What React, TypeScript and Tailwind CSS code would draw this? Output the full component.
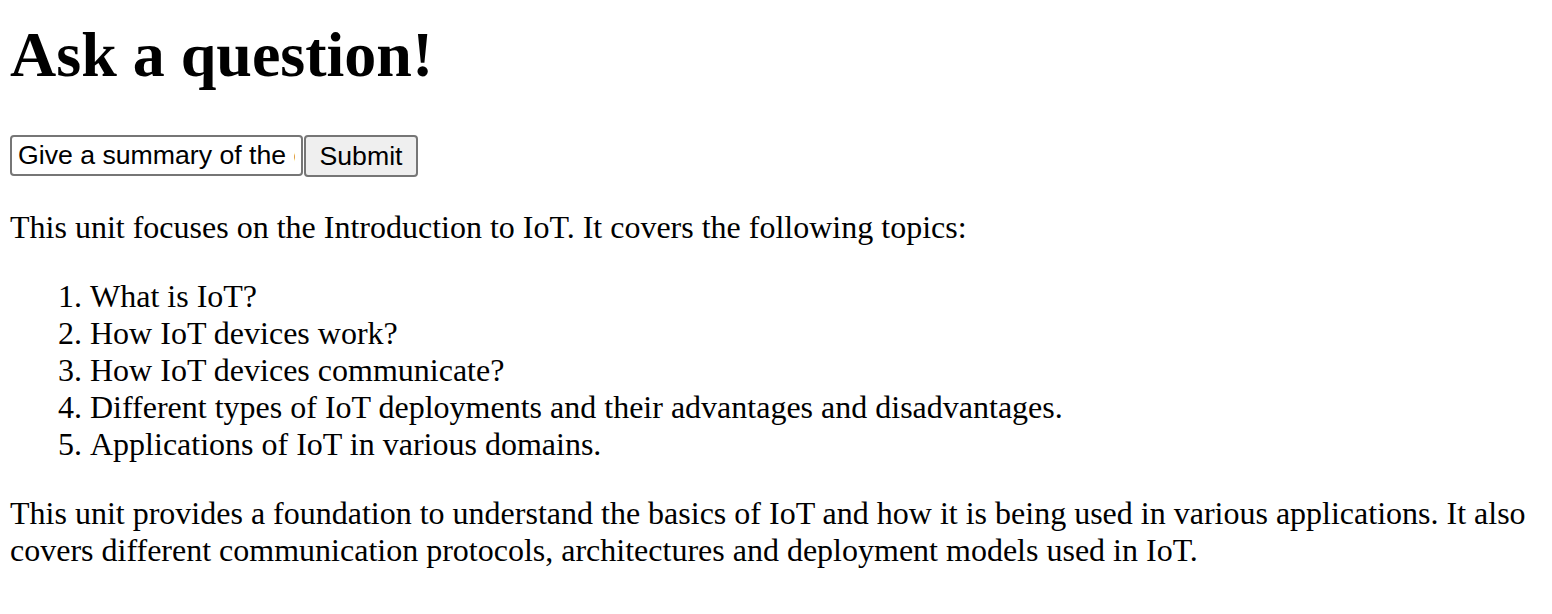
import { useState } from "react";

const TOPICS = [
  "What is IoT?",
  "How IoT devices work?",
  "How IoT devices communicate?",
  "Different types of IoT deployments and their advantages and disadvantages.",
  "Applications of IoT in various domains.",
];

export default function App() {
  const [question, setQuestion] = useState("Give a summary of the content");

  return (
    <div className="min-h-screen bg-white px-[10px] pt-[18px] font-['Liberation_Serif','Times_New_Roman',serif] text-black">
      <h1 className="mb-[43px] text-[64px] font-bold leading-[74px]">Ask a question!</h1>

      <form className="flex items-start" onSubmit={(e) => e.preventDefault()}>
        <input
          type="text"
          value={question}
          onChange={(e) => setQuestion(e.target.value)}
          className="h-[41px] w-[293px] rounded-[4px] border-2 border-[#767676] bg-white pl-[6px] pr-[6px] font-['Liberation_Sans',Arial,sans-serif] text-[26.67px] leading-[normal] text-black outline-none"
        />
        <button
          type="submit"
          className="ml-[1px] h-[42px] w-[114px] rounded-[4px] border-2 border-[#767676] bg-[#efefef] font-['Liberation_Sans',Arial,sans-serif] text-[26.67px] leading-[normal] text-black"
        >
          Submit
        </button>
      </form>

      <p className="mt-[32px] text-[32px] leading-[37px]">
        This unit focuses on the Introduction to IoT. It covers the following topics:
      </p>

      <ol className="mt-[32px] list-decimal pl-[80px] text-[32px] leading-[37px]">
        {TOPICS.map((topic) => (
          <li key={topic}>{topic}</li>
        ))}
      </ol>

      <p className="mt-[32px] text-[32px] leading-[37px]">
        This unit provides a foundation to understand the basics of IoT and how it is being used in various
        applications. It also covers different communication protocols, architectures and deployment models used in
        IoT.
      </p>
    </div>
  );
}
